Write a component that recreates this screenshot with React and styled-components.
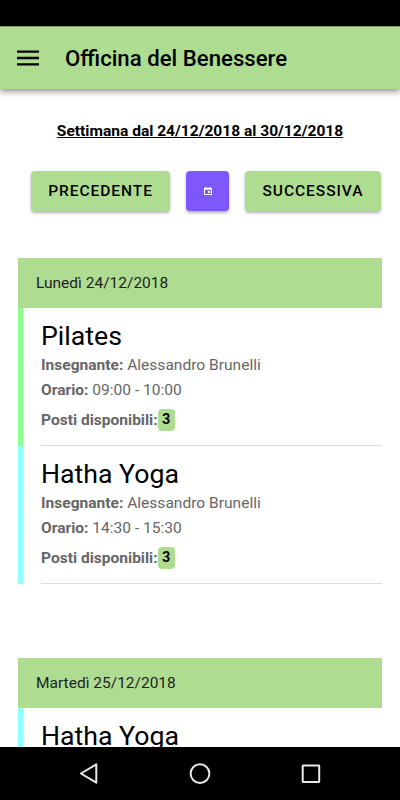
import styled, { createGlobalStyle } from "styled-components";

const giorni = [
    {
        id: 1,
        titolo: "Lunedì 24/12/2018",
        lezioni: [
            { id: 1, nome: "Pilates", insegnante: "Alessandro Brunelli", orario: "09:00 - 10:00", posti: 3, colore: "#8cff8c" },
            { id: 2, nome: "Hatha Yoga", insegnante: "Alessandro Brunelli", orario: "14:30 - 15:30", posti: 3, colore: "#8cffff" },
        ],
    },
    {
        id: 2,
        titolo: "Martedì 25/12/2018",
        lezioni: [
            { id: 3, nome: "Hatha Yoga", colore: "#8cffff" },
        ],
    },
];

export default function App() {
    return (
        <PageContainer>
            <GlobalStyle />
            <StatusBar />
            <Header>
                <MenuButton aria-label="Menu">
                    <svg width="22" height="16" viewBox="0 0 22 16">
                        <path d="M0 1.700h22M0 8h22M0 14.300h22" stroke="#000" strokeWidth="2.300" />
                    </svg>
                </MenuButton>
                <h1>Officina del Benessere</h1>
            </Header>

            <Content>
                <WeekTitle>Settimana dal 24/12/2018 al 30/12/2018</WeekTitle>
                <WeekButtons>
                    <Button $width="139px">PRECEDENTE</Button>
                    <Button $width="43px" $color="#7e57ff" aria-label="Calendario">
                        <svg width="8" height="8" viewBox="0 0 8 8">
                            <path fillRule="evenodd" fill="#fff" d="M1 0h1.300v.8h3.400V0H7v.8q1 0 1 .8v5.600q0 .8-.8.8H.8Q0 8 0 7.200V1.600Q0 .8 1 .8zM1 2.700v4.300h6V2.700zM4 4h2.300v2H4z" />
                        </svg>
                    </Button>
                    <Button $width="136px">SUCCESSIVA</Button>
                </WeekButtons>

                {giorni.map((giorno) => (
                    <Day key={giorno.id}>
                        <DayTitle>{giorno.titolo}</DayTitle>
                        {giorno.lezioni.map((lezione) => (
                            <Lesson key={lezione.id} $color={lezione.colore}>
                                <LessonInfo>
                                    <h2>{lezione.nome}</h2>
                                    {lezione.orario && (
                                        <>
                                            <p><b>Insegnante:</b> {lezione.insegnante}</p>
                                            <p><b>Orario:</b> {lezione.orario}</p>
                                            <Places>
                                                <b>Posti disponibili:</b>
                                                <Badge>{lezione.posti}</Badge>
                                            </Places>
                                        </>
                                    )}
                                </LessonInfo>
                            </Lesson>
                        ))}
                    </Day>
                ))}
            </Content>

            <NavigationBar>
                <svg width="20" height="22" viewBox="0 0 20 22">
                    <path d="M17.300 1.300v18.400L1.900 10.500z" />
                </svg>
                <svg width="22" height="22" viewBox="0 0 22 22">
                    <circle cx="11" cy="10.600" r="9.400" />
                </svg>
                <svg width="20" height="20" viewBox="0 0 20 20">
                    <rect x="1.700" y="1.500" width="16.500" height="16.500" rx=".4" />
                </svg>
            </NavigationBar>
        </PageContainer>
    );
}

const GlobalStyle = createGlobalStyle`
    * {
        box-sizing: border-box;
    }

    body, h1, h2, p {
        margin: 0;
    }

    body {
        font-family: Roboto, "Liberation Sans", sans-serif;
        background-color: white;
    }
`;

const PageContainer = styled.div`
    width: 400px;
    height: 800px;
    display: flex;
    flex-direction: column;
    overflow: hidden;
    background-color: white;
`;

const StatusBar = styled.div`
    height: 26px;
    flex-shrink: 0;
    background-color: black;
`;

const Header = styled.header`
    height: 63px;
    flex-shrink: 0;
    display: flex;
    align-items: center;
    gap: 26px;
    padding: 0 17px 1px;
    background-color: #aedd92;
    border-top: 1px solid #7f9f6b;
    box-shadow: 0 2px 7px rgba(0, 0, 0, 0.5);
    z-index: 1;

    h1{
        font-size: 22.200px;
        font-weight: 500;
        line-height: 28px;
        white-space: nowrap;
    }
`;

const MenuButton = styled.button`
    display: flex;
    padding: 0;
    border: none;
    background: none;
`;

const Content = styled.main`
    flex: 1;
    min-height: 0;
    overflow: hidden;
    padding: 31px 18px 0;
`;

const WeekTitle = styled.p`
    font-size: 15.550px;
    font-weight: 700;
    line-height: 22px;
    text-align: center;
    text-decoration: underline;
    white-space: nowrap;
`;

const WeekButtons = styled.div`
    display: flex;
    gap: 16px;
    margin: 29px 0 47px 13px;
`;

const Button = styled.button`
    width: ${(props) => props.$width};
    height: 40px;
    flex-shrink: 0;
    display: flex;
    align-items: center;
    justify-content: center;
    padding: 0;
    border: none;
    border-radius: 4px;
    background-color: ${(props) => props.$color || "#aedd92"};
    color: black;
    font-family: inherit;
    font-size: 15.550px;
    font-weight: 500;
    letter-spacing: 0.93px;
    box-shadow: 0 2px 3px rgba(0, 0, 0, 0.3);
`;

const Day = styled.section`
    margin-bottom: 74px;
`;

const DayTitle = styled.div`
    height: 50px;
    padding-left: 18px;
    background-color: #aedd92;
    color: #222;
    font-size: 15.500px;
    line-height: 50px;
`;

const Lesson = styled.div`
    height: 138px;
    padding-left: 18px;
    border-left: 5px solid ${(props) => props.$color};
`;

const LessonInfo = styled.div`
    height: 100%;
    padding-top: 12px;
    border-bottom: 1px solid #dedede;
    color: #666;
    font-size: 15.550px;

    h2{
        color: black;
        font-size: 26.700px;
        font-weight: 400;
        line-height: 32px;
        margin-bottom: 1px;
    }

    p{
        line-height: 24.500px;
    }
`;

const Places = styled.div`
    display: flex;
    align-items: center;
    height: 22px;
    margin-top: 7px;
`;

const Badge = styled.span`
    width: 17px;
    height: 22px;
    border-radius: 4px;
    background-color: #aedd92;
    color: black;
    font-size: 14.500px;
    font-weight: 700;
    line-height: 21px;
    text-align: center;
`;

const NavigationBar = styled.nav`
    height: 53px;
    flex-shrink: 0;
    display: flex;
    align-items: center;
    justify-content: space-between;
    padding: 0 79px;
    background-color: black;

    svg{
        fill: none;
        stroke: #e8e8e8;
        stroke-width: 2;
        stroke-linejoin: round;
    }
`;
